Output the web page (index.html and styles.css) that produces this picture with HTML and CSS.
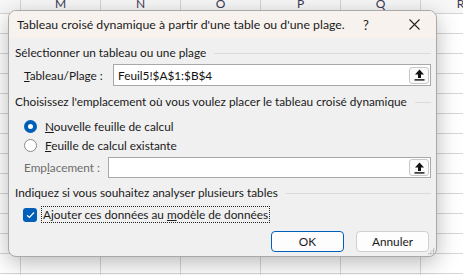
FILE: index.html
```html
<!DOCTYPE html>
<html lang="fr">
<head>
<meta charset="utf-8">
<title>Tableau croisé dynamique</title>
<link rel="stylesheet" href="styles.css">
</head>
<body>
<div class="sheet">
  <div class="colheads">
    <span class="ch ch-first"></span>
    <span class="ch">M</span>
    <span class="ch">N</span>
    <span class="ch">O</span>
    <span class="ch">P</span>
    <span class="ch">Q</span>
    <span class="ch">R</span>
  </div>
  <div class="cells"></div>
</div>

<div class="dialog">
  <div class="titlebar">
    <span class="title">Tableau croisé dynamique à partir d'une table ou d'une plage.</span>
    <span class="help">?</span>
    <svg class="close" width="11" height="11" viewBox="0 0 11 11"><path d="M0.5 0.5 L10.5 10.5 M10.5 0.5 L0.5 10.5" stroke="#222" stroke-width="1.1" fill="none"/></svg>
  </div>
  <div class="content">
    <div class="group"><span>Sélectionner un tableau ou une plage</span><i class="rule"></i></div>
    <div class="field field-table">
      <span class="flabel"><u>T</u>ableau/Plage :</span>
      <div class="input">
        <span class="value">Feuil5!$A$1:$B$4</span>
        <span class="refbtn"><svg width="11" height="12" viewBox="0 0 11 12"><path d="M5.5 0.5 L10 5.5 L7 5.5 L7 9 L4 9 L4 5.5 L1 5.5 Z" fill="#111"/><rect x="0.5" y="10.2" width="10" height="1.4" fill="#111"/></svg></span>
      </div>
    </div>

    <div class="group group-2"><span>Choisissez l'emplacement où vous voulez placer le tableau croisé dynamique</span><i class="rule"></i></div>
    <div class="radio radio-1"><span class="rb rb-on"></span><span><u>N</u>ouvelle feuille de calcul</span></div>
    <div class="radio radio-2"><span class="rb"></span><span><u>F</u>euille de calcul existante</span></div>
    <div class="field field-loc">
      <span class="flabel flabel-dis">Emp<u>l</u>acement :</span>
      <div class="input input-loc">
        <span class="value"></span>
        <span class="refbtn"><svg width="11" height="12" viewBox="0 0 11 12"><path d="M5.5 0.5 L10 5.5 L7 5.5 L7 9 L4 9 L4 5.5 L1 5.5 Z" fill="#111"/><rect x="0.5" y="10.2" width="10" height="1.4" fill="#111"/></svg></span>
      </div>
    </div>

    <div class="group group-3"><span>Indiquez si vous souhaitez analyser plusieurs tables</span><i class="rule"></i></div>
    <div class="check">
      <span class="cb"><svg width="9" height="8" viewBox="0 0 9 8"><path d="M1 4.2 L3.4 6.5 L8 1.5" stroke="#fff" stroke-width="1.2" fill="none"/></svg></span>
      <span class="focus">Ajouter ces données au <u>m</u>odèle de données</span>
    </div>

    <div class="buttons">
      <span class="btn btn-default">OK</span>
      <span class="btn">Annuler</span>
    </div>
  </div>
  <span class="grip"></span>
</div>
</body>
</html>
```

FILE: styles.css
```css
* { box-sizing: border-box; }
html, body { margin: 0; padding: 0; }
body {
  width: 463px;
  height: 275px;
  overflow: hidden;
  background: #ffffff;
  font-family: "Lato", "Noto Sans", sans-serif;
  font-size: 11.8px;
  color: #1a1a1a;
  position: relative;
}

/* background spreadsheet */
.sheet { width: 463px; height: 275px; }
.colheads {
  display: flex;
  height: 14px;
  background: #f7f7f7;
  border-bottom: 1px solid #d4d4d4;
  overflow: hidden;
}
.ch {
  flex: 0 0 80px;
  height: 13px;
  line-height: 7px;
  text-align: center;
  color: #3a3a52;
  font-size: 12px;
  border-right: 1px solid #d4d4d4;
}
.ch-first { flex-basis: 21px; }
.cells {
  height: 261px;
  background-image:
    linear-gradient(to right, #d6d6d6 1px, transparent 1px),
    linear-gradient(to bottom, #d6d6d6 1px, transparent 1px);
  background-size: 80px 20px;
  background-position: 20px 19px;
}

/* dialog window */
.dialog {
  position: absolute;
  left: 8px;
  top: 10px;
  width: 429px;
  height: 247px;
  background: #f0f0f0;
  border: 1px solid #a9a9a9;
  border-radius: 8px;
  box-shadow: 0 6px 22px rgba(0,0,0,0.28);
  overflow: hidden;
  display: flex;
  flex-direction: column;
}
.titlebar {
  height: 27px;
  flex: 0 0 27px;
  background: #f8f2ee;
  display: flex;
  align-items: center;
  padding-left: 8px;
  white-space: nowrap;
}
.title { flex: 1; color: #1a1a1a; font-size: 12.3px; }
.help { width: 10px; margin-right: 36px; font-size: 13px; color: #222; }
.close { margin-right: 16px; }

.content {
  padding: 0 5px 0 6px;
  display: flex;
  flex-direction: column;
}
.group {
  display: flex;
  align-items: center;
  height: 16px;
  line-height: 16px;
  margin-top: 7px;
  white-space: nowrap;
}
.group .rule {
  flex: 1;
  height: 1px;
  background: #dadada;
  margin-left: 8px;
  margin-top: 1px;
}
.group-2 { margin-top: 8px; }

.field {
  display: flex;
  align-items: center;
  margin-top: 3px;
  padding-left: 9px;
}
.flabel { width: 89px; white-space: nowrap; }
.flabel-dis { width: 84px; color: #6d6d6d; }
.input {
  flex: 1;
  height: 22px;
  background: #fff;
  border: 1px solid #a8a8a8;
  display: flex;
  align-items: center;
  padding-left: 4px;
  padding-right: 1px;
}
.input-loc { height: 21px; }
.value { flex: 1; color: #111; }
.refbtn {
  width: 20px;
  height: 17px;
  border: 1px solid #c8c8c8;
  border-radius: 3px;
  background: #fafafa;
  display: flex;
  align-items: center;
  justify-content: center;
}

.radio {
  display: flex;
  align-items: center;
  height: 18px;
  padding-left: 9px;
  margin-top: 7px;
}
.radio-2 { margin-top: 1px; }
.rb {
  width: 13px;
  height: 13px;
  border-radius: 50%;
  border: 1px solid #8a8a8a;
  background: #fff;
  margin-right: 8px;
}
.rb-on {
  border: 4px solid #005fb8;
  background: #fff;
}

.check {
  display: flex;
  align-items: center;
  height: 17px;
  margin-top: 5px;
  padding-left: 8px;
}
.cb {
  width: 14px;
  height: 14px;
  border-radius: 3px;
  background: #005fb8;
  display: flex;
  align-items: center;
  justify-content: center;
  margin-right: 4px;
}
.focus {
  border: 1px dotted #222;
  padding: 0 1px;
  line-height: 15px;
  white-space: nowrap;
}

.buttons {
  display: flex;
  justify-content: flex-end;
  gap: 12px;
  margin-top: 8px;
  padding-right: 2px;
}
.btn {
  width: 73px;
  height: 21px;
  border: 1px solid #d0d0d0;
  border-radius: 4px;
  background: #fdfdfd;
  display: flex;
  align-items: center;
  justify-content: center;
  color: #1a1a1a;
}
.btn-default {
  border: 1px solid #005fb8;
}

.grip {
  position: absolute;
  right: 1px;
  bottom: 1px;
  width: 8px;
  height: 8px;
  background-image: radial-gradient(circle, #b0b0b0 0.8px, transparent 1px);
  background-size: 2.6px 2.6px;
  clip-path: polygon(100% 0, 100% 100%, 0 100%);
}
```
